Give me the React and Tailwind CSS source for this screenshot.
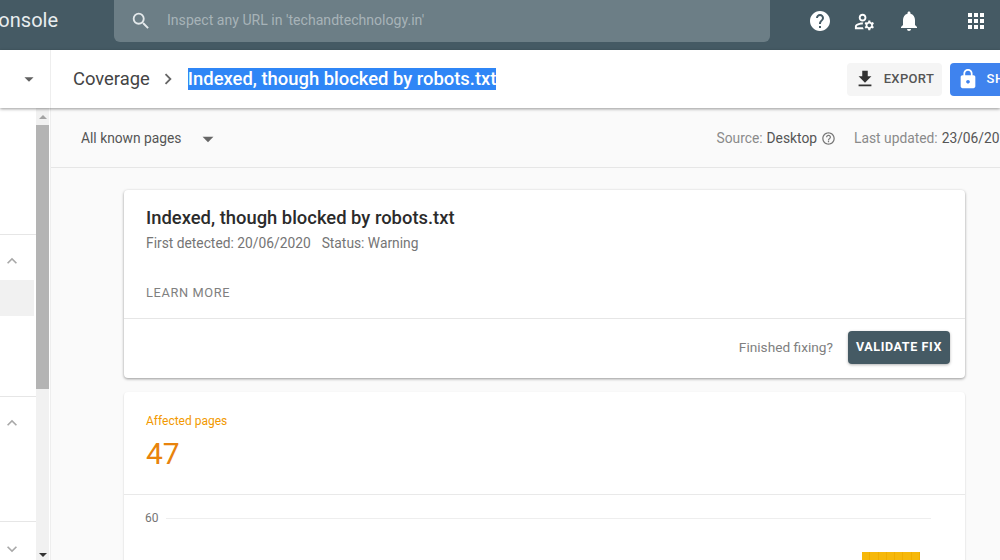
import {
  MdSearch,
  MdHelp,
  MdOutlineManageAccounts,
  MdNotifications,
  MdApps,
  MdArrowDropDown,
  MdChevronRight,
  MdFileDownload,
  MdLock,
  MdHelpOutline,
  MdExpandLess,
  MdExpandMore,
} from 'react-icons/md';

const font = { fontFamily: 'Roboto, sans-serif' };

function Header() {
  return (
    <div className="flex h-[50px] shrink-0 bg-[#455a64] text-white">
      <div className="flex h-[40px] w-[58px] shrink-0 items-center justify-end overflow-hidden whitespace-nowrap text-[20px] text-[#e8edef]">
        Search Console
      </div>
      <div className="ml-[56px] flex h-[42px] w-[656px] shrink-0 items-center rounded-b-md bg-[#6c7e86] pl-4">
        <MdSearch size={22} className="shrink-0 text-[#e4e9eb]" />
        <span className="ml-[15px] text-[14.1px] text-[#a7b3b8]">Inspect any URL in 'techandtechnology.in'</span>
      </div>
      <div className="flex h-[42px] items-center pl-[38px]">
        <MdHelp size={24} className="shrink-0" />
        <MdOutlineManageAccounts size={23} className="ml-[21px] shrink-0" />
        <MdNotifications size={24} className="ml-[21px] shrink-0" />
        <MdApps size={24} className="ml-[43px] shrink-0" />
      </div>
    </div>
  );
}

function Toolbar() {
  return (
    <div className="relative z-10 flex h-[58px] shrink-0 items-center bg-white shadow-[0_1px_3px_rgba(0,0,0,0.4)]">
      <div className="flex h-full w-[51px] shrink-0 items-center justify-end border-r border-[#eeeeee] pr-[10px] text-[#616161]">
        <MdArrowDropDown size={22} className="shrink-0" />
      </div>
      <span className="ml-[22px] shrink-0 text-[18.4px] text-[#444444]">Coverage</span>
      <MdChevronRight size={22} className="ml-[7px] shrink-0 text-[#666666]" />
      <span className="ml-[9px] shrink-0 bg-[#2f86f6] text-[18.4px] leading-[22px] font-medium whitespace-nowrap text-white">
        Indexed, though blocked by robots.txt
      </span>
      <div className="ml-[351px] flex h-[33px] w-[95px] shrink-0 items-center justify-center gap-2 rounded-sm bg-[#f5f5f5]">
        <MdFileDownload size={22} className="shrink-0 text-[#333333]" />
        <span className="pr-[2px] text-[13px] font-medium tracking-wide text-[#555555]">EXPORT</span>
      </div>
      <div className="ml-[8px] flex h-[33px] w-[80px] shrink-0 items-center overflow-hidden rounded-l-sm bg-[#3f83ee] pl-[7px] text-white">
        <MdLock size={22} className="shrink-0" />
        <span className="ml-[7px] text-[13px] font-medium tracking-wider">SHARE</span>
      </div>
    </div>
  );
}

function Sidebar() {
  return (
    <div className="flex w-[51px] shrink-0 border-r border-[#eeeeee] bg-white">
      <div className="flex w-[36px] shrink-0 flex-col text-[#a8a8a8]">
        <div className="h-[127px] shrink-0 border-b border-[#e6e6e6]" />
        <div className="h-[162px] shrink-0 border-b border-[#e6e6e6] pt-4">
          <MdExpandLess size={20} className="ml-[2px]" />
          <div className="mt-[9px] mr-[2px] h-[36px] bg-[#f1f1f1]" />
        </div>
        <div className="h-[125px] shrink-0 border-b border-[#e6e6e6] pt-4">
          <MdExpandLess size={20} className="ml-[2px]" />
        </div>
        <div className="pt-[17px]">
          <MdExpandMore size={20} className="ml-[2px]" />
        </div>
      </div>
      <div className="flex w-[13px] shrink-0 flex-col bg-[#f1f1f1]">
        <div className="flex h-[17px] shrink-0 items-center justify-center">
          <div className="h-0 w-0 border-x-[4px] border-b-[4px] border-x-transparent border-b-[#a3a3a3]" />
        </div>
        <div className="h-[264px] shrink-0 bg-[#b4b4b4]" />
        <div className="flex-1" />
        <div className="flex h-[10px] shrink-0 items-center justify-center">
          <div className="h-0 w-0 border-x-[4px] border-t-[4px] border-x-transparent border-t-[#333333]" />
        </div>
      </div>
    </div>
  );
}

function Chart() {
  return (
    <div className="relative h-[70px]">
      <div className="flex items-center pt-[15px] pl-[21px]">
        <span className="w-[21px] text-xs text-[#757575]">60</span>
        <div className="h-px w-[765px] bg-[#eeeeee]" />
      </div>
      {/* bars of the coverage chart */}
      <div className="absolute top-[57px] left-[738px] flex h-[13px]">
        {[0, 1, 2, 3, 4, 5, 6].map((i) => (
          <div key={i} className="w-[8.3px] border-r border-[#f0ad00] bg-[#f6b80a]" />
        ))}
      </div>
    </div>
  );
}

function Main() {
  return (
    <div className="min-w-0 flex-1 overflow-hidden bg-[#fafafa]">
      <div className="flex h-[60px] items-center border-b border-[#e6e6e6] pt-[2px] text-[13.8px] whitespace-nowrap">
        <span className="ml-[30px] shrink-0 text-[#555555]">All known pages</span>
        <MdArrowDropDown size={26} className="ml-[14px] shrink-0 text-[#666666]" />
        <span className="ml-[495px] shrink-0 text-[#8a8a8a]">Source:</span>
        <span className="ml-1 shrink-0 text-[#555555]">Desktop</span>
        <MdHelpOutline size={15} className="ml-1 shrink-0 text-[#777777]" />
        <span className="ml-[18px] shrink-0 text-[#8a8a8a]">Last updated:</span>
        <span className="ml-1 shrink-0 text-[#555555]">23/06/2020</span>
      </div>

      <div className="mt-[22px] ml-[73px] w-[841px]">
        <div className="rounded-sm bg-white shadow-[0_1px_3px_rgba(0,0,0,0.4)]">
          <div className="h-[129px] border-b border-[#e6e6e6] px-[22px] pt-[17px]">
            <div className="text-[18.4px] leading-[22px] font-medium text-[#2b2b2b]">
              Indexed, though blocked by robots.txt
            </div>
            <div className="mt-[4px] flex gap-[11px] text-[13.8px] leading-5 text-[#757575]">
              <span>First detected: 20/06/2020</span>
              <span>Status: Warning</span>
            </div>
            <div className="mt-[30px] text-[12.8px] tracking-wider text-[#808080]">LEARN MORE</div>
          </div>
          <div className="flex h-[59px] items-center justify-end gap-[15px] pr-[15px] pb-[2px]">
            <span className="text-[13.7px] text-[#808080]">Finished fixing?</span>
            <div className="flex h-[33px] w-[102px] items-center justify-center rounded-sm bg-[#455a64] text-[12.5px] font-bold tracking-wider text-white shadow-[0_1px_3px_rgba(0,0,0,0.3)]">
              VALIDATE FIX
            </div>
          </div>
        </div>

        <div className="mt-[14px] rounded-sm bg-white shadow-[0_1px_2px_rgba(0,0,0,0.2)]">
          <div className="h-[103px] border-b border-[#e9e9e9] px-[22px] pt-[21px]">
            <div className="text-xs leading-4 text-[#f29900]">Affected pages</div>
            <div className="mt-[5px] text-[30px] leading-10 text-[#e8830c]">47</div>
          </div>
          <Chart />
        </div>
      </div>
    </div>
  );
}

export default function App() {
  return (
    <div className="flex h-[560px] w-[1000px] flex-col overflow-hidden bg-white" style={font}>
      <Header />
      <Toolbar />
      <div className="flex min-h-0 flex-1">
        <Sidebar />
        <Main />
      </div>
    </div>
  );
}
